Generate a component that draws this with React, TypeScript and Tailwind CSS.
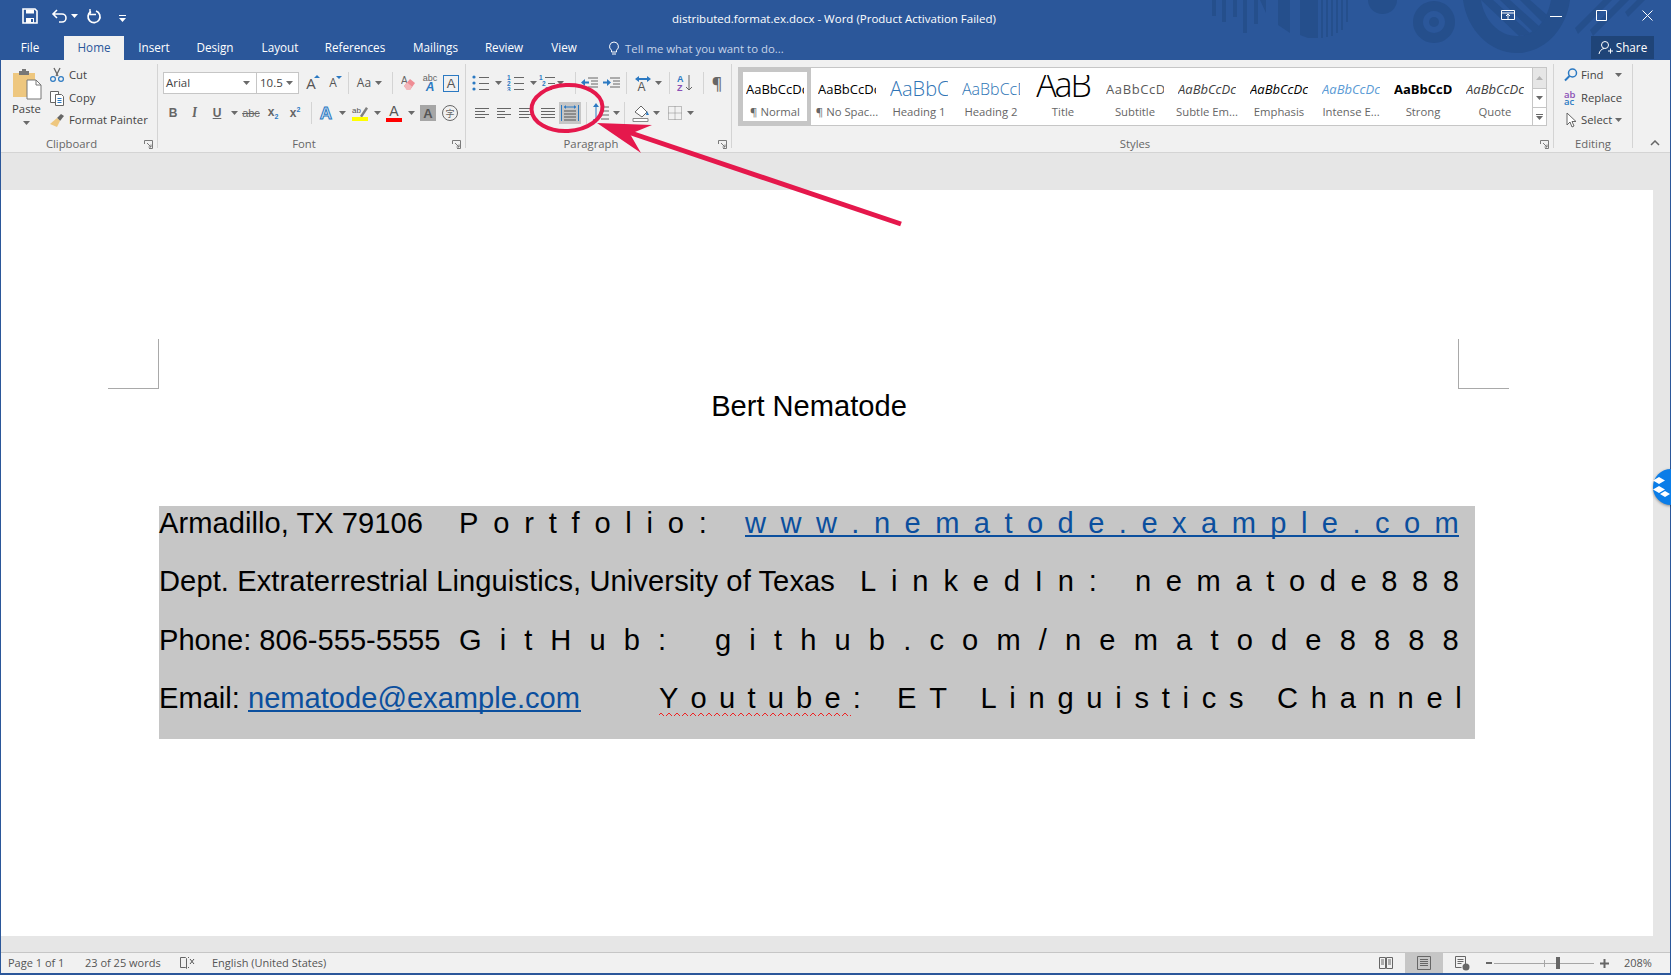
import { ReactNode } from "react";

const Caret = ({ className = "" }: { className?: string }) => (
  <svg width="7" height="4" viewBox="0 0 7 4" className={className}>
    <path d="M0 0h7L3.5 4z" fill="#6a6a6a" />
  </svg>
);

const Sep = ({ className = "" }: { className?: string }) => (
  <div className={"flex h-[22px] justify-center " + className}>
    <div className="h-full w-px bg-[#d4d4d4]" />
  </div>
);

// one button of the ribbon: fixed width, icon centred or left with a caret
const Tool = ({ className = "w-[22px]", children }: { className?: string; children: ReactNode }) => (
  <div className={"flex h-[22px] shrink-0 items-center justify-center " + className}>{children}</div>
);

const Launcher = () => (
  <svg width="9" height="9" viewBox="0 0 9 9" className="absolute bottom-[-1px] right-[4px]">
    <path d="M.5 4V.5H8.5V8.5H5M3 3l4 4M7 4.5V7H4.5" fill="none" stroke="#7a7a7a" />
  </svg>
);

const Group = ({ className, label, launcher = true, children }: { className: string; label: string; launcher?: boolean; children: ReactNode }) => (
  <div className={"relative flex h-[84px] shrink-0 flex-col border-r border-[#d4d4d4] " + className}>
    <div className="min-h-0 flex-1">{children}</div>
    <div className={"h-[15px] translate-y-[3px] text-center text-[11.3px] leading-[15px] text-[#666] " + (launcher ? "pr-[15px]" : "")}>{label}</div>
    {launcher && <Launcher />}
  </div>
);

const Lines = ({ rows, x = 1, stroke = "#666" }: { rows: [number, number][]; x?: number; stroke?: string }) => (
  <svg width="16" height="16" viewBox="0 0 16 16">
    {rows.map(([w, y], i) => (
      <path key={i} d={`M${x} ${y + 0.5}h${w}`} stroke={stroke} />
    ))}
  </svg>
);

const ListIcon = ({ kind }: { kind: "bullet" | "num" | "multi" }) => (
  <svg width="18" height="16" viewBox="0 0 18 16">
    {[2, 8, 14].map((y, i) =>
      kind === "bullet" ? (
        <circle key={y} cx="2" cy={y} r="1.6" fill="#2b79c2" />
      ) : (
        <text key={y} x={kind === "multi" ? 1 + i * 3 : 0} y={y + 2.5} fontSize="6.5" fontWeight="700" fill="#2b79c2" fontFamily="Liberation Sans">
          {i + 1}
        </text>
      ),
    )}
    {[2, 8, 14].map((y, i) => (
      <path key={y} d={`M${kind === "multi" ? 7 + i * 3 : 7} ${y + 0.5}H${kind === "multi" && i === 2 ? 14 : 17}`} stroke="#666" />
    ))}
  </svg>
);

const FontRows = () => (
  <div className="flex flex-col gap-[8px] pl-[5px] pt-[8px]">
    <div className="flex">
      <div className="flex h-[22px] w-[94px] items-center justify-between border border-[#c6c6c6] bg-white pl-[2px] pr-[6px] text-[11.5px] text-[#444]">
        Arial
        <Caret />
      </div>
      <div className="flex h-[22px] w-[42px] items-center justify-between border border-l-0 border-[#c6c6c6] bg-white pl-[3px] pr-[5px] text-[11.5px] text-[#444]">
        10.5
        <Caret />
      </div>
      <Tool className="ml-[1px] w-[22px]">
        <span className="relative text-[15px] text-[#555]">A<span className="absolute -right-[4px] top-[3px] h-0 w-0 border-x-[3px] border-b-[3px] border-x-transparent border-b-[#2b79c2]" /></span>
      </Tool>
      <Tool className="w-[22px]">
        <span className="relative text-[12px] text-[#555]">A<span className="absolute -right-[5px] top-[2px] h-0 w-0 border-x-[3px] border-t-[3px] border-x-transparent border-t-[#2b79c2]" /></span>
      </Tool>
      <Sep className="w-[8px]" />
      <Tool className="w-[35px] gap-[4px]">
        <span className="text-[12px] text-[#555]">Aa</span>
        <Caret />
      </Tool>
      <Sep className="w-[11px]" />
      <Tool className="w-[22px]">
        <svg width="16" height="16" viewBox="0 0 16 16">
          <text x="0" y="9" fontSize="10" fill="#666" fontFamily="Liberation Sans">A</text>
          <path d="M3 11l6-7 5 4-5 7H6z" fill="#ef8c94" />
          <path d="M3 11l3-3.5 5 4L9 15H6z" fill="#f2b8bc" />
        </svg>
      </Tool>
      <Tool className="w-[20px]">
        <div className="relative h-[18px] w-[16px] text-center font-['Liberation_Sans',sans-serif] leading-[9px]">
          <div className="text-[9px] text-[#666]">abc</div>
          <div className="text-[12px] font-bold italic text-[#2b79c2]">A</div>
        </div>
      </Tool>
      <Tool className="w-[22px]">
        <div className="flex h-[17px] w-[16px] items-center justify-center border border-[#2b79c2] font-['Liberation_Sans',sans-serif] text-[13px] leading-none text-[#555]">A</div>
      </Tool>
    </div>
    <div className="flex font-['Liberation_Sans',sans-serif] text-[#666]">
      <Tool className="w-[20px]"><b className="text-[12px]">B</b></Tool>
      <Tool className="w-[23px]"><i className="font-serif text-[13px] font-bold">I</i></Tool>
      <Tool className="w-[22px]"><b className="text-[12px] underline">U</b></Tool>
      <Tool className="w-[12px]"><Caret /></Tool>
      <Tool className="w-[22px]"><span className="text-[11px] line-through">abc</span></Tool>
      <Tool className="w-[22px]"><b className="text-[12px]">x<span className="align-sub text-[7px] text-[#2b79c2]">2</span></b></Tool>
      <Tool className="w-[22px]"><b className="text-[12px]">x<span className="align-super text-[7px] text-[#2b79c2]">2</span></b></Tool>
      <Sep className="w-[10px]" />
      <Tool className="w-[20px]">
        <span className="text-[17px] font-bold leading-none text-[#cfe2f5] [-webkit-text-stroke:1px_#2b79c2]">A</span>
      </Tool>
      <Tool className="w-[13px]"><Caret /></Tool>
      <Tool className="w-[22px]">
        <div className="flex flex-col items-center">
          <svg width="16" height="12" viewBox="0 0 16 12">
            <text x="0" y="8" fontSize="8" fill="#555" fontFamily="Liberation Sans">ab</text>
            <path d="M8 11l6-9 2 1.5-6 9z" fill="#7f7f7f" />
          </svg>
          <div className="h-[4px] w-[16px] bg-[#ffff00]" />
        </div>
      </Tool>
      <Tool className="w-[12px]"><Caret /></Tool>
      <Tool className="w-[22px]">
        <div className="flex flex-col items-center leading-none">
          <span className="text-[14px] leading-[13px] text-[#555]">A</span>
          <div className="h-[4px] w-[16px] bg-[#ff0000]" />
        </div>
      </Tool>
      <Tool className="w-[12px]"><Caret /></Tool>
      <Tool className="w-[22px]">
        <div className="flex h-[16px] w-[16px] items-center justify-center bg-[#a6a6a6] text-[13px] font-bold leading-none text-[#555]">A</div>
      </Tool>
      <Tool className="w-[22px]">
        <div className="flex h-[16px] w-[16px] items-center justify-center rounded-full border border-[#666] font-['Noto_Sans_CJK_SC',sans-serif] text-[9px] leading-none">字</div>
      </Tool>
    </div>
  </div>
);

const ParagraphRows = () => (
  <div className="flex flex-col gap-[8px] pl-[5px] pt-[8px]">
    <div className="flex">
      <Tool className="w-[33px] justify-start gap-[5px] pl-[1px]"><ListIcon kind="bullet" /><Caret /></Tool>
      <Tool className="w-[34px] justify-start gap-[5px] pl-[3px]"><ListIcon kind="num" /><Caret /></Tool>
      <Tool className="w-[33px] justify-start gap-[1px]"><ListIcon kind="multi" /><Caret /></Tool>
      <Sep className="w-[8px]" />
      <Tool className="w-[22px]">
        <svg width="18" height="16" viewBox="0 0 18 16"><path d="M7 3h10M10 6h7M10 9h7M7 12h10" stroke="#666" /><path d="M0 7.5L4 4v2.5h4v2H4V11z" fill="#2b79c2" /></svg>
      </Tool>
      <Tool className="w-[22px]">
        <svg width="18" height="16" viewBox="0 0 18 16"><path d="M7 3h10M10 6h7M10 9h7M7 12h10" stroke="#666" /><path d="M8 7.5L4 4v2.5H0v2h4V11z" fill="#2b79c2" /></svg>
      </Tool>
      <Sep className="w-[6px]" />
      <Tool className="w-[37px] gap-[3px]">
        <svg width="18" height="16" viewBox="0 0 18 16">
          <path d="M1 4l4-3v2h8V1l4 3-4 3V5H5v2z" fill="#2b79c2" />
          <text x="3.5" y="16" fontSize="12" fill="#555" fontFamily="Liberation Sans">A</text>
        </svg>
        <Caret />
      </Tool>
      <Sep className="w-[6px]" />
      <Tool className="w-[28px]">
        <svg width="18" height="18" viewBox="0 0 18 18">
          <text x="0" y="8" fontSize="9" fontWeight="700" fill="#2b79c2" fontFamily="Liberation Sans">A</text>
          <text x="0" y="17" fontSize="9" fontWeight="700" fill="#8a4fb5" fontFamily="Liberation Sans">Z</text>
          <path d="M12 1v15M9 13l3 3 3-3" fill="none" stroke="#666" />
        </svg>
      </Tool>
      <Sep className="w-[6px]" />
      <Tool className="w-[22px]"><span className="text-[16px] font-semibold leading-none text-[#666]">¶</span></Tool>
    </div>
    <div className="flex">
      <Tool><Lines rows={[[14, 3], [10, 6], [14, 9], [10, 12]]} /></Tool>
      <Tool><Lines rows={[[14, 3], [8, 6], [14, 9], [8, 12]]} x={1} /></Tool>
      <Tool><Lines rows={[[14, 3], [10, 6], [14, 9], [10, 12]]} /></Tool>
      <Tool><Lines rows={[[14, 3], [14, 6], [14, 9], [14, 12]]} /></Tool>
      <Tool className="w-[22px] bg-[#c6c6c6]">
        <svg width="18" height="18" viewBox="0 0 18 18">
          <path d="M.5 1v16M17.5 1v16" stroke="#2b79c2" />
          <path d="M3 3h12" stroke="#2b79c2" />
          <path d="M3 3l2-2v4zM15 3l-2-2v4z" fill="#2b79c2" />
          <path d="M3 7h12M3 10h12M3 13h12M3 16h12" stroke="#555" />
        </svg>
      </Tool>
      <Sep className="w-[10px]" />
      <Tool className="w-[30px] gap-[3px]">
        <svg width="18" height="20" viewBox="0 0 18 20">
          <path d="M4 2v16" stroke="#2b79c2" />
          <path d="M4 0l3 4H1zM4 20l3-4H1z" fill="#2b79c2" />
          <path d="M9 4h8M9 8h8M9 12h8M9 16h8" stroke="#666" />
        </svg>
        <Caret />
      </Tool>
      <Sep className="w-[6px]" />
      <Tool className="w-[37px] gap-[3px]">
        <svg width="18" height="20" viewBox="0 0 18 20">
          <path d="M3 9l6-6 6 6-5 5z" fill="#fff" stroke="#666" />
          <path d="M15 8l2 4h-3z" fill="#2b79c2" />
          <path d="M1 15.5h15v3H1z" fill="#fff" stroke="#888" />
        </svg>
        <Caret />
      </Tool>
      <Tool className="ml-[1px] w-[31px] gap-[4px]">
        <svg width="16" height="16" viewBox="0 0 16 16">
          <path d="M1.5 1.5h13v13h-13zM8 1.5v13M1.5 8h13" fill="none" stroke="#888" strokeDasharray="1 1" />
        </svg>
        <Caret />
      </Tool>
    </div>
  </div>
);

const styleItems: { label: string; cls: string; sample?: string }[] = [
  { label: "¶ Normal", cls: "text-[13px] text-black" },
  { label: "¶ No Spac...", cls: "text-[13px] text-black" },
  { label: "Heading 1", cls: "text-[20px] font-light text-[#2e74b5]" },
  { label: "Heading 2", cls: "text-[16px] font-light text-[#2e74b5]" },
  { label: "Title", cls: "-translate-y-[5px] text-[34px] font-light tracking-[-2px] text-black", sample: "AaB" },
  { label: "Subtitle", cls: "text-[13px] tracking-[0.6px] text-[#5a5a5a]" },
  { label: "Subtle Em...", cls: "text-[13px] italic text-[#404040]" },
  { label: "Emphasis", cls: "text-[13px] italic text-black" },
  { label: "Intense E...", cls: "text-[13px] italic text-[#5b9bd5]" },
  { label: "Strong", cls: "text-[13px] font-bold text-black" },
  { label: "Quote", cls: "text-[13px] italic text-[#404040]" },
];

const StyleGallery = () => (
  <div className="ml-[6px] mt-[3px] flex h-[59px] w-[809px]">
    <div className="flex h-full w-[795px] border border-[#c6c6c6] bg-white">
      {styleItems.map((s, i) => (
        <div key={s.label} className={"flex h-full w-[72px] shrink-0 flex-col items-center " + (i === 0 ? "border-[4px] border-[#c6c6c6] pt-[3px]" : "pt-[7px]")}>
          <div className="flex h-[28px] w-[58px] items-center overflow-hidden whitespace-nowrap">
            <span className={"mx-auto block leading-none " + s.cls}>{s.sample ?? "AaBbCcDc"}</span>
          </div>
          <div className="mt-[1px] whitespace-nowrap text-[11.3px] leading-[16px] text-[#666]">{s.label}</div>
        </div>
      ))}
    </div>
    <div className="flex h-full w-[14px] flex-col border border-l-0 border-[#c6c6c6] bg-white">
      <div className="flex h-[21px] items-center justify-center border-b border-[#c6c6c6] bg-[#e6e6e6]"><Caret className="rotate-180 opacity-40" /></div>
      <div className="flex h-[19px] items-center justify-center border-b border-[#c6c6c6]"><Caret /></div>
      <div className="flex flex-1 flex-col items-center justify-center gap-[1px]"><div className="h-px w-[7px] bg-[#6a6a6a]" /><Caret /></div>
    </div>
  </div>
);

const Clipboard = () => (
  <div className="flex pt-[4px]">
    <div className="flex w-[49px] shrink-0 flex-col items-center pl-[2px]">
      <svg width="30" height="32" viewBox="0 0 30 32">
        <path d="M1 5h22v24H1z" fill="#eec77f" />
        <path d="M7 3h10v4H7z" fill="#777" />
        <path d="M10 1h4v3h-4z" fill="#777" />
        <path d="M15 12h9l5 5v14H15z" fill="#fff" stroke="#777" />
        <path d="M24 12v5h5" fill="none" stroke="#777" />
      </svg>
      <span className="mt-[2px] text-[11.3px] leading-[14px] text-[#444]">Paste</span>
      <Caret className="mt-[5px]" />
    </div>
    <div className="-ml-[1px] flex flex-col gap-[8.500px] text-[11.3px] leading-[14px] text-[#444]">
      {[
        {
          t: "Cut",
          i: <g fill="none"><path d="M5 1l4 8M11 1L7 9" stroke="#666" strokeWidth="1.3" /><circle cx="4" cy="12" r="2.4" stroke="#2b79c2" strokeWidth="1.2" /><circle cx="12" cy="12" r="2.4" stroke="#2b79c2" strokeWidth="1.2" /></g>,
        },
        {
          t: "Copy",
          i: <g fill="#fff" stroke="#666"><path d="M1.5 1.5h8v11h-8z" /><path d="M6.5 4.5h6l2 2v9h-8z" /><path d="M8.5 8.5h4M8.5 10.5h4M8.5 12.5h4" stroke="#2b79c2" /></g>,
        },
        {
          t: "Format Painter",
          i: <g><path d="M8 6l4-4 3 2-4 5z" fill="#666" /><path d="M1 12l7-6 3 3-3 6z" fill="#eec77f" /></g>,
        },
      ].map((r) => (
        <div key={r.t} className="flex items-center gap-[4px]">
          <svg width="16" height="16" viewBox="0 0 16 16" className="-my-[1px]">{r.i}</svg>
          {r.t}
        </div>
      ))}
    </div>
  </div>
);

const Editing = () => (
  <div className="flex flex-col gap-[8.500px] pl-[10px] pt-[4px] text-[11.3px] leading-[14px] text-[#444]">
    <div className="flex items-center gap-[3px]">
      <svg width="14" height="16" viewBox="0 0 14 16" className="-my-[1px]"><circle cx="8.5" cy="6" r="4" fill="none" stroke="#2b79c2" strokeWidth="1.5" /><path d="M5.5 9L1 13.5" stroke="#2b79c2" strokeWidth="2" /></svg>
      Find
      <Caret className="ml-[8px]" />
    </div>
    <div className="flex items-center gap-[3px]">
      <div className="w-[14px] text-[9.5px] font-semibold leading-[7px]"><span className="text-[#8a4fb5]">ab</span><br /><span className="text-[#2b79c2]">ac</span></div>
      Replace
    </div>
    <div className="flex items-center gap-[3px]">
      <svg width="14" height="16" viewBox="0 0 14 16" className="-my-[1px]"><path d="M3 1v12l3-3 2 5 2-1-2-4.5h4z" fill="#fff" stroke="#666" /></svg>
      Select
      <Caret />
    </div>
  </div>
);

// letters stretched to fill their width, as Word's distributed alignment does
const Spaced = ({ text, className, link = false }: { text: string; className: string; link?: boolean }) => (
  <div className={"flex shrink-0 justify-between " + (link ? "h-[31px] border-b-[2px] border-[#0b4f9e] text-[#0b4f9e] " : "") + className}>
    {text.split("").map((c, i) => (
      <span key={i}>{c === " " ? "\u00a0" : c}</span>
    ))}
  </div>
);

const tabs: [string, string][] = [
  ["Insert", "w-[60px]"],
  ["Design", "w-[62px]"],
  ["Layout", "w-[68px]"],
  ["References", "w-[82px]"],
  ["Mailings", "w-[79px]"],
  ["Review", "w-[58px]"],
  ["View", "w-[62px]"],
];

const TitlePattern = () => (
  <svg className="absolute right-0 top-0" width="471" height="60" viewBox="1200 0 471 60">
    <g fill="#254f8c">
      <path d="M1212 0h4v16h-4zM1222 0h4v22h-4zM1233 0h4v17h-4zM1243 0h4v33h-4zM1254 0h4v24h-4z" />
      <path d="M1260 0h6v13zM1278 0h12v33l-12-8z" />
      <path d="M1300 0h18v38h-10l-8-3zM1321 0h2v38h-2zM1326 0h2v37h-2zM1331 0h2v36h-2zM1336 0h2v33h-2zM1341 0h2v30h-2zM1346 0h2v22h-2z" />
      <path d="M1368 0h29a14.500 14 0 0 1-29 0z" />
      <path fillRule="evenodd" d="M1434 1a21 21 0 1 0 .01 0zM1434 11a11 11 0 1 1-.01 0z" />
      <circle cx="1434" cy="22" r="5" />
      <path d="M1463 0h18c3 20 18 36 36 36 16 0 30-14 34-36h19c-4 30-26 53-53 53s-50-23-54-53z" />
      <path d="M1481 0h12l38 34-12 2zM1500 0h10l30 27-6 6zM1520 0h10l17 15-4 8z" />
      <path d="M1575 28l28-28h9l-34 34zM1590 30l30-30h9l-36 36zM1625 12l12-12h8l-17 17z" />
    </g>
  </svg>
);

export default function App() {
  return (
    <div className="relative flex h-[975px] w-[1671px] flex-col overflow-hidden bg-[#2b579a] font-['Open_Sans',sans-serif]">
      {/* title bar */}
      <div className="relative flex h-[36px] shrink-0 text-white">
        <TitlePattern />
        <div className="relative flex w-[150px] items-start pl-[22px] pt-[8px]">
          <svg width="16" height="16" viewBox="0 0 16 16"><path d="M1 1h12l2 2v12H1z" fill="none" stroke="#fff" strokeWidth="1.6" /><path d="M4 1.500h8v4H4zM4 10h8v5H4z" fill="#fff" /><path d="M9 11h2v3H9z" fill="#2b579a" /></svg>
          <svg width="18" height="16" viewBox="0 0 18 16" className="ml-[13px]"><path d="M6 2L2 6l4 4M2 6h9a4 4 0 0 1 0 8H8" fill="none" stroke="#fff" strokeWidth="1.6" /></svg>
          <Caret className="ml-[2px] mt-[6px] brightness-[5]" />
          <svg width="16" height="16" viewBox="0 0 16 16" className="ml-[8px]"><path d="M5 3.500a6 6 0 1 0 5-.5" fill="none" stroke="#fff" strokeWidth="1.7" /><path d="M4 1v5.500h6" fill="none" stroke="#fff" strokeWidth="1.4" /></svg>
          <svg width="7" height="7" viewBox="0 0 7 7" className="ml-[17px] mt-[7px]"><path d="M0 0h7v1H0zM0 3h7L3.500 7z" fill="#fff" /></svg>
        </div>
        <div className="relative ml-[522px] pt-[10px] text-[11.5px] leading-[18px]">distributed.format.ex.docx - Word (Product Activation Failed)</div>
        <div className="relative ml-auto flex w-[170px] items-start justify-between pr-[18px] pt-[10px]">
          <svg width="14" height="12" viewBox="0 0 14 12"><path d="M.5.500h13v9H.5zM.5 3h13M7 9V4.500M5 6l2-2 2 2" fill="none" stroke="#fff" /></svg>
          <svg width="12" height="12" viewBox="0 0 12 12"><path d="M0 6.500h12" stroke="#fff" /></svg>
          <svg width="11" height="11" viewBox="0 0 11 11"><path d="M.5.500h10v10H.5z" fill="none" stroke="#fff" /></svg>
          <svg width="11" height="11" viewBox="0 0 11 11"><path d="M.5.500l10 10M10.500.500l-10 10" stroke="#fff" /></svg>
        </div>
      </div>

      {/* tabs */}
      <div className="relative flex h-[24px] shrink-0 text-[11.7px] leading-[23px] text-white">
        <div className="w-[64px] pr-[4px] text-center">File</div>
        <div className="w-[60px] bg-[#f1f1f1] text-center text-[#2b579a]">Home</div>
        {tabs.map(([t, w]) => (
          <div key={t} className={"text-center " + w}>{t}</div>
        ))}
        <div className="ml-[13px] flex items-center gap-[5px] text-[11.4px] text-[#c7d4e8]">
          <svg width="12" height="15" viewBox="0 0 12 15"><path d="M6 1a4.500 4.500 0 0 0-2.500 8.200V11h5V9.200A4.500 4.500 0 0 0 6 1zM4 13h4" fill="none" stroke="#fff" /></svg>
          Tell me what you want to do...
        </div>
        <div className="ml-auto mr-[17px] flex h-[23px] w-[63px] items-center justify-center gap-[3px] bg-[#1f4478]">
          <svg width="15" height="15" viewBox="0 0 15 15"><path d="M7 1.500a3.500 3.500 0 1 0 0 7 3.500 3.500 0 0 0 0-7zM1 14c.5-3 2.500-5 5-5.500M10 11h5M12.500 8.500v5" fill="none" stroke="#fff" /></svg>
          Share
        </div>
      </div>

      {/* ribbon */}
      <div className="mx-px flex h-[93px] shrink-0 border-b border-[#d4d4d4] bg-[#f1f1f1] pt-[4px]">
        <Group className="w-[157px]" label="Clipboard"><Clipboard /></Group>
        <Group className="w-[308px]" label="Font"><FontRows /></Group>
        <Group className="w-[266px]" label="Paragraph"><ParagraphRows /></Group>
        <Group className="w-[822px]" label="Styles"><StyleGallery /></Group>
        <Group className="w-[79px]" label="Editing" launcher={false}><Editing /></Group>
        <div className="flex flex-1 items-end justify-center pb-[6px] pl-[6px]">
          <svg width="10" height="6" viewBox="0 0 10 6"><path d="M1 5l4-4 4 4" fill="none" stroke="#666" strokeWidth="1.5" /></svg>
        </div>
      </div>

      {/* document */}
      <div className="mx-px flex min-h-0 flex-1 flex-col bg-[#e6e6e6] pr-[17px] pt-[37px]">
        <div className="h-[746px] overflow-hidden bg-white pl-[107px] pt-[149px] font-['Liberation_Sans',Arial,sans-serif] text-[29.1px] leading-[34px] text-black">
          <div className="flex h-[50px] w-[1401px] justify-between">
            <div className="h-full w-[51px] border-b border-r border-[#a9a9a9]" />
            <div className="h-full w-[51px] border-b border-l border-[#a9a9a9]" />
          </div>
          <div className="ml-[51px] w-[1300px] text-center">Bert Nematode</div>
          <div className="ml-[51px] mt-[83px] flex h-[233px] w-[1316px] flex-col gap-[24.3px] bg-[#c6c6c6]">
            <div className="flex">
              <span className="w-[300px] shrink-0 tracking-[0.05px]">Armadillo, TX 79106</span>
              <Spaced text="Portfolio:" className="w-[248px]" />
              <Spaced text="www.nematode.example.com" className="ml-[38px] w-[714px]" link />
            </div>
            <div className="flex">
              <span className="w-[701px] shrink-0 whitespace-nowrap tracking-[0.1px]">Dept. Extraterrestrial Linguistics, University of Texas</span>
              <Spaced text="LinkedIn:" className="w-[237px]" />
              <Spaced text="nematode888" className="ml-[38px] w-[324px]" />
            </div>
            <div className="flex">
              <span className="w-[300px] shrink-0">Phone: 806-555-5555</span>
              <Spaced text="GitHub:" className="w-[207px]" />
              <Spaced text="github.com/nematode8888" className="ml-[49px] w-[744px]" />
            </div>
            <div className="flex">
              <span className="w-[89px] shrink-0">Email:</span>
              <div className="h-[31px] w-[333px] shrink-0 whitespace-nowrap border-b-[2px] border-[#0b4f9e] text-[#0b4f9e]">nematode@example.com</div>
              <div className="relative ml-[78px] w-[202px] shrink-0">
                <Spaced text="Youtube:" className="w-[202px]" />
                <svg className="absolute left-0 top-[31px]" width="194" height="4" viewBox="0 0 194 4">
                  <path d={"M0 3" + Array.from({ length: 48 }, (_, i) => ` l2 ${i % 2 ? 2 : -2} l2 ${i % 2 ? -2 : 2}`).join("")} fill="none" stroke="#e22" />
                </svg>
              </div>
              <Spaced text="ET Linguistics Channel" className="ml-[36px] w-[565px]" />
            </div>
          </div>
        </div>
      </div>

      {/* status bar */}
      <div className="mx-px mb-[2px] flex h-[21px] shrink-0 items-center border-t border-[#c6c6c6] bg-[#f1f1f1] text-[11px] text-[#555]">
        <span className="w-[84px] pl-[7px]">Page 1 of 1</span>
        <span className="w-[94px]">23 of 25 words</span>
        <svg width="16" height="14" viewBox="0 0 16 14"><path d="M1.500 1.500h5l1 1v10l-1-1h-5zM9 1.500h1M9 11.500h1" fill="none" stroke="#666" /><path d="M11 3l4 5M15 3l-4 5" stroke="#555" /></svg>
        <span className="ml-[17px]">English (United States)</span>
        <div className="ml-auto flex h-full items-center">
          <Tool className="h-full w-[39px]"><svg width="14" height="14" viewBox="0 0 14 14"><path d="M.5 1.500h6v11h-6zM7.500 1.500h6v11h-6zM2 4h3M2 6h3M2 8h3M9 4h3M9 6h3M9 8h3" fill="none" stroke="#666" /></svg></Tool>
          <div className="flex h-full w-[38px] items-center justify-center bg-[#c6c6c6]">
            <svg width="14" height="14" viewBox="0 0 14 14"><path d="M.5.500h13v13H.5zM3 3.500h8M3 5.500h8M3 7.500h8M3 9.500h8" fill="none" stroke="#666" /></svg>
          </div>
          <Tool className="h-full w-[38px]"><svg width="15" height="15" viewBox="0 0 15 15"><path d="M.5.500h10v8M.5.500v11h6M2.500 3.500h6M2.500 5.500h6M2.500 7.500h4" fill="none" stroke="#666" /><circle cx="11" cy="11" r="3.500" fill="#666" /></svg></Tool>
          <div className="ml-[5px] h-[2px] w-[6px] bg-[#666]" />
          <div className="relative ml-[2px] mr-[6px] h-px w-[100px] bg-[#a6a6a6]">
            <div className="absolute left-[50px] top-[-3px] h-[7px] w-px bg-[#a6a6a6]" />
            <div className="absolute left-[62px] top-[-6px] h-[12px] w-[4px] bg-[#666]" />
          </div>
          <svg width="9" height="9" viewBox="0 0 9 9"><path d="M0 4.500h9M4.500 0v9" stroke="#666" strokeWidth="2" /></svg>
          <span className="ml-[15px] mr-[9px] w-[37px] text-[11px]">208%</span>
        </div>
      </div>

      {/* dropbox badge hanging off the right edge */}
      <div className="absolute left-[1653px] top-[469px] flex h-[36px] w-[36px] items-center justify-center rounded-full bg-[#0a7de8] shadow-[0_1px_3px_rgba(0,0,0,0.4)]">
        <svg width="24" height="22" viewBox="0 0 24 22" className="-ml-[12px]"><path d="M6 1l6 3.500-6 3.500-6-3.500zM6 10l6 3.500-6 3.500-6-3.500zM12 15l5 3-5 3-5-3z" fill="#fff" /></svg>
      </div>

      {/* red annotation */}
      <svg className="pointer-events-none absolute left-0 top-0" width="1671" height="975" viewBox="0 0 1671 975">
        <ellipse cx="567" cy="108" rx="35.500" ry="23" fill="none" stroke="#e5184c" strokeWidth="4" transform="rotate(-3 567 108)" />
        <path d="M901 224L628 132" stroke="#e5184c" strokeWidth="5" />
        <path d="M597 123L652 125L630 134L641 153z" fill="#e5184c" />
      </svg>
    </div>
  );
}
